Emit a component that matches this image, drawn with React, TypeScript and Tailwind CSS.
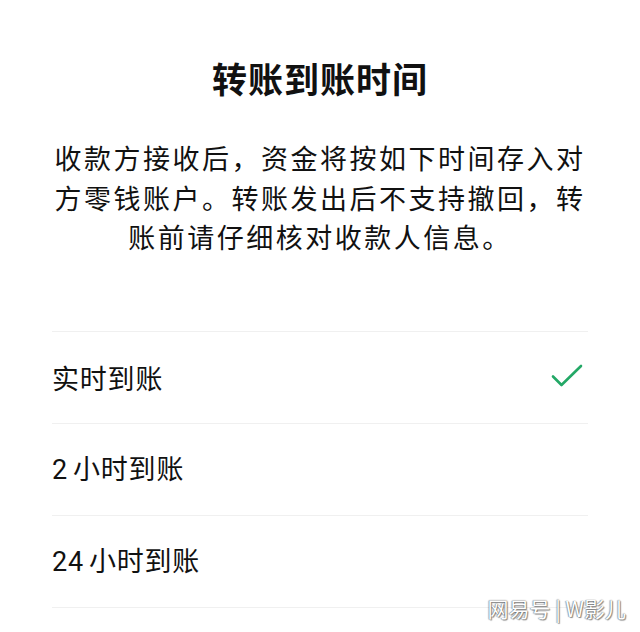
import React, { useState } from "react";

type Option = {
  id: string;
  hours?: string;
  label: string;
};

const options: Option[] = [
  { id: "realtime", label: "实时到账" },
  { id: "2h", hours: "2", label: "小时到账" },
  { id: "24h", hours: "24", label: "小时到账" },
];

function CheckIcon() {
  return (
    <svg width="36" height="28" viewBox="0 0 36 28" fill="none">
      <path
        d="M3 13.5 L11.5 22 L31 3"
        stroke="#23a866"
        strokeWidth="2.6"
        strokeLinecap="round"
        strokeLinejoin="round"
      />
    </svg>
  );
}

export default function App() {
  const [selected, setSelected] = useState("realtime");

  return (
    <div
      className="relative w-[640px] h-[632px] overflow-hidden bg-white text-[#111111]"
      style={{ fontFamily: '"Noto Sans CJK SC", "Noto Sans", sans-serif' }}
    >
      {/* Header */}
      <h1 className="pt-[54px] text-center text-[35px] font-bold leading-[48px] tracking-[1px]">
        转账到账时间
      </h1>

      <p className="mt-[36px] text-center text-[27px] leading-[39.5px] tracking-[2.5px] whitespace-nowrap">
        收款方接收后，资金将按如下时间存入对
        <br />
        方零钱账户。转账发出后不支持撤回，转
        <br />
        账前请仔细核对收款人信息。
      </p>

      {/* Options */}
      <div className="mt-[74px] mx-[52px] border-t border-[#f0f0f0]">
        {options.map((o) => (
          <div
            key={o.id}
            onClick={() => setSelected(o.id)}
            className="flex h-[92px] items-center justify-between border-b border-[#f0f0f0] cursor-pointer"
          >
            <span className="text-[27px] leading-none tracking-[0.8px]">
              {o.hours && (
                <span
                  className="mr-[5px]"
                  style={{ fontFamily: "Roboto, sans-serif" }}
                >
                  {o.hours}
                </span>
              )}
              {o.label}
            </span>
            {selected === o.id && (
              <span className="mr-[2px]">
                <CheckIcon />
              </span>
            )}
          </div>
        ))}
      </div>

      {/* Watermark */}
      <div
        className="absolute right-[14px] bottom-[13px] text-[21px] leading-none text-white"
        style={{
          textShadow:
            "0 0 1px #555, 1px 1px 1px rgba(0,0,0,0.45), -1px 0 1px rgba(0,0,0,0.25)",
        }}
      >
        网易号 | W影儿
      </div>
    </div>
  );
}
